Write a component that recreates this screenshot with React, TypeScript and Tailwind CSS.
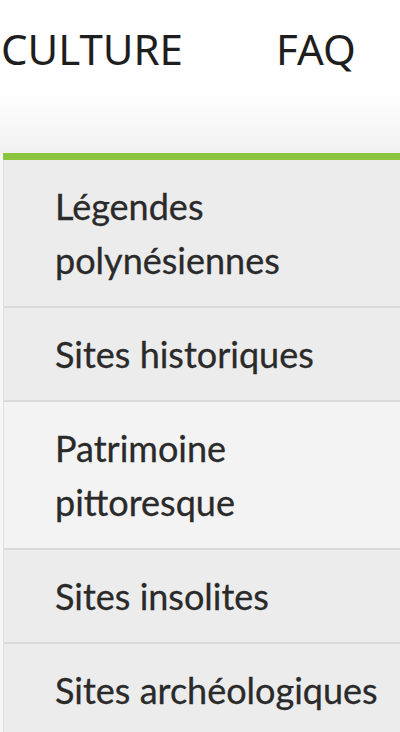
import React from 'react';

const items = [
  { label: ['Légendes', 'polynésiennes'], active: false },
  { label: ['Sites historiques'], active: false },
  { label: ['Patrimoine', 'pittoresque'], active: true },
  { label: ['Sites insolites'], active: false },
  { label: ['Sites archéologiques'], active: false },
];

const App = () => {
  return (
    <div className="w-[400px] h-[732px] overflow-hidden bg-white flex flex-col">
      <header className="h-[153px] shrink-0 bg-gradient-to-b from-white from-60% to-[#f1f1f1]">
        <nav className="flex pt-[28px] text-[42px] leading-none text-[#1e1e1e] font-['Noto_Sans',sans-serif]">
          <span className="ml-[1px]">CULTURE</span>
          <span className="ml-[93px]">FAQ</span>
        </nav>
      </header>

      <div className="flex flex-1 min-h-0">
        <div className="w-[3px] shrink-0 bg-[#f7f7f7]" />
        <div className="flex-1 flex flex-col border-l border-[#dedede]">
          <div className="h-[7px] shrink-0 bg-[#8cc53f] -ml-px" />
          <ul className="bg-[#ececec] flex-1 font-['Lato',sans-serif] text-[36px] leading-[54px] text-[#2a2a2a] [-webkit-text-stroke:0.3px_#2a2a2a]">
            {items.map((item, i) => (
              <li
                key={i}
                className={
                  'px-[51px] py-[19px] border-b-2 border-[#dadada] ' +
                  (item.active ? 'bg-[#f3f3f3]' : 'bg-[#ececec]')
                }
              >
                {item.label.map((line, j) => (
                  <div key={j} className="whitespace-nowrap">{line}</div>
                ))}
              </li>
            ))}
          </ul>
        </div>
      </div>
    </div>
  );
};

export default App;
